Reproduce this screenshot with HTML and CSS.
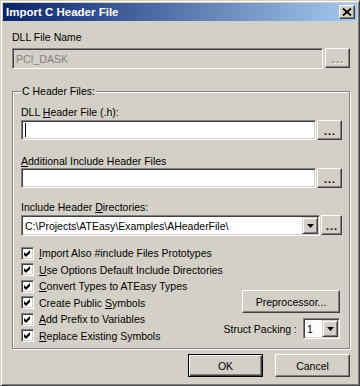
FILE: index.html
```html
<!DOCTYPE html>
<html lang="en">
<head>
    <meta charset="UTF-8">
    <title>Import C Header File</title>
    <link rel="stylesheet" href="styles.css">
</head>
<body>
    <div class="window">
        <div class="titlebar">
            <span class="title">Import C Header File</span>
            <button class="close">
                <svg width="10" height="8" viewBox="0 0 10 8"><path d="M1 0.5 L9 7.5 M9 0.5 L1 7.5" stroke="#000" stroke-width="1.8" fill="none"/></svg>
            </button>
        </div>

        <div class="dialog">
            <div class="label">DLL File Name</div>
            <div class="field-row top-row">
                <div class="edit disabled">PCI_DASK</div>
                <button class="btn browse" disabled>...</button>
            </div>

            <fieldset class="group">
                <legend>C Header Files:</legend>

                <div class="label">DLL <u>H</u>eader File (.h):</div>
                <div class="field-row">
                    <div class="edit"><span class="caret"></span></div>
                    <button class="btn browse">...</button>
                </div>

                <div class="label spaced"><u>A</u>dditional Include Header Files</div>
                <div class="field-row flush">
                    <div class="edit"></div>
                    <button class="btn browse">...</button>
                </div>

                <div class="label spaced-sm">Include Header <u>D</u>irectories:</div>
                <div class="field-row">
                    <div class="combo">
                        <span class="combo-text">C:\Projects\ATEasy\Examples\AHeaderFile\</span>
                        <span class="drop"><svg width="7" height="4" viewBox="0 0 7 4"><path d="M0 0 H7 L3.5 4 Z" fill="#000"/></svg></span>
                    </div>
                    <button class="btn browse small">...</button>
                </div>

                <div class="options">
                    <div class="checks">
                        <div class="check-row"><span class="check"><svg width="7" height="7" viewBox="0 0 7 7"><path d="M0 2 L2 4 L6 0 L6 3 L2 7 L0 5 Z" fill="#000"/></svg></span><span><u>I</u>mport Also #include Files Prototypes</span></div>
                        <div class="check-row"><span class="check"><svg width="7" height="7" viewBox="0 0 7 7"><path d="M0 2 L2 4 L6 0 L6 3 L2 7 L0 5 Z" fill="#000"/></svg></span><span><u>U</u>se Options Default Include Directories</span></div>
                        <div class="check-row"><span class="check"><svg width="7" height="7" viewBox="0 0 7 7"><path d="M0 2 L2 4 L6 0 L6 3 L2 7 L0 5 Z" fill="#000"/></svg></span><span><u>C</u>onvert Types to ATEasy Types</span></div>
                        <div class="check-row"><span class="check"><svg width="7" height="7" viewBox="0 0 7 7"><path d="M0 2 L2 4 L6 0 L6 3 L2 7 L0 5 Z" fill="#000"/></svg></span><span>Create Public <u>S</u>ymbols</span></div>
                        <div class="check-row"><span class="check"><svg width="7" height="7" viewBox="0 0 7 7"><path d="M0 2 L2 4 L6 0 L6 3 L2 7 L0 5 Z" fill="#000"/></svg></span><span><u>A</u>dd Prefix to Variables</span></div>
                        <div class="check-row"><span class="check"><svg width="7" height="7" viewBox="0 0 7 7"><path d="M0 2 L2 4 L6 0 L6 3 L2 7 L0 5 Z" fill="#000"/></svg></span><span><u>R</u>eplace Existing Symbols</span></div>
                    </div>
                    <div class="side">
                        <button class="btn preproc">Preprocessor...</button>
                        <div class="packing">
                            <span>Struct Packing :</span>
                            <div class="combo mini">
                                <span class="combo-text">1</span>
                                <span class="drop"><svg width="7" height="4" viewBox="0 0 7 4"><path d="M0 0 H7 L3.5 4 Z" fill="#000"/></svg></span>
                            </div>
                        </div>
                    </div>
                </div>
            </fieldset>

            <div class="actions">
                <button class="btn action default">OK</button>
                <button class="btn action">Cancel</button>
            </div>
        </div>
    </div>
</body>
</html>
```

FILE: styles.css
```css
* {
    box-sizing: border-box;
}
body {
    margin: 0;
    font-family: "Liberation Sans", Arial, sans-serif;
    font-size: 10.5px;
    color: #000;
    background: #d4d0c8;
}
.window {
    width: 360px;
    height: 386px;
    padding: 2px;
    background: #d4d0c8;
    border: 1px solid;
    border-color: #d4d0c8 #404040 #404040 #d4d0c8;
    box-shadow: inset 1px 1px #fff, inset -1px -1px #808080;
}
.titlebar {
    height: 18px;
    display: flex;
    align-items: center;
    justify-content: space-between;
    padding: 0 2px 0 3px;
    background: linear-gradient(to right, #0a246a, #a6caf0);
    color: #fff;
    font-weight: bold;
    font-size: 11.5px;
}
.close {
    width: 16px;
    height: 14px;
    padding: 0;
    display: flex;
    align-items: center;
    justify-content: center;
    background: #d4d0c8;
    border: 1px solid;
    border-color: #fff #404040 #404040 #fff;
    box-shadow: inset -1px -1px #808080;
}
.dialog {
    padding: 10px 7px 0 9px;
}
.label {
    height: 13px;
    line-height: 13px;
    white-space: nowrap;
}
.label.spaced {
    margin-top: 15px;
}
.label.spaced-sm {
    margin-top: 13px;
}
.field-row {
    display: flex;
    gap: 1px;
    margin-top: 1px;
}
.field-row.top-row {
    margin-top: 4px;
    gap: 2px;
}
.field-row.flush {
    margin-top: 0;
}
.edit {
    flex: 1;
    height: 20px;
    padding: 0 3px;
    display: flex;
    align-items: center;
    background: #fff;
    border: 1px solid;
    border-color: #808080 #fff #fff #808080;
    box-shadow: inset 1px 1px #404040, inset -1px -1px #d4d0c8;
    white-space: nowrap;
}
.top-row .edit {
    height: 21px;
}
.edit.disabled {
    background: #d4d0c8;
    color: #808080;
}
.caret {
    width: 1px;
    height: 14px;
    background: #000;
}
.btn {
    font-family: inherit;
    font-size: 10.5px;
    color: #000;
    padding: 0;
    background: #d4d0c8;
    border: 1px solid;
    border-color: #fff #404040 #404040 #fff;
    box-shadow: inset -1px -1px #808080;
}
.browse {
    width: 25px;
    height: 20px;
    font-size: 11px;
    font-weight: bold;
    letter-spacing: 1px;
    padding: 2px 0 0 1px;
}
.browse:disabled {
    color: #808080;
    text-shadow: 1px 1px #fff;
}
.browse.small {
    width: 21px;
}
.combo {
    flex: 1;
    height: 21px;
    padding: 1px;
    display: flex;
    align-items: stretch;
    background: #fff;
    border: 1px solid;
    border-color: #808080 #fff #fff #808080;
    box-shadow: inset 1px 1px #404040, inset -1px -1px #d4d0c8;
}
.combo-text {
    flex: 1;
    padding-left: 2px;
    display: flex;
    align-items: center;
    white-space: nowrap;
    overflow: hidden;
}
.drop {
    width: 16px;
    display: flex;
    align-items: center;
    justify-content: center;
    background: #d4d0c8;
    border: 1px solid;
    border-color: #d4d0c8 #404040 #404040 #d4d0c8;
    box-shadow: inset 1px 1px #fff, inset -1px -1px #808080;
}
.combo.mini {
    flex: none;
    width: 37px;
}
.group {
    margin: 16px 0 0;
    padding: 8px 7px 4px 8px;
    min-width: 0;
    border: 1px solid #808080;
    box-shadow: inset 1px 1px #fff, 1px 1px #fff;
}
.group legend {
    padding: 0 1px;
    line-height: 13px;
    background: #d4d0c8;
}
.options {
    display: flex;
    justify-content: space-between;
    margin-top: 9px;
}
.check-row {
    height: 16.5px;
    display: flex;
    align-items: center;
    gap: 5px;
    white-space: nowrap;
}
.check {
    width: 13px;
    height: 13px;
    display: flex;
    align-items: center;
    justify-content: center;
    background: #fff;
    border: 1px solid;
    border-color: #808080 #fff #fff #808080;
    box-shadow: inset 1px 1px #404040, inset -1px -1px #d4d0c8;
}
.side {
    display: flex;
    flex-direction: column;
    align-items: flex-end;
    gap: 5px;
    padding-top: 45px;
    margin-right: 2px;
}
.preproc {
    width: 98px;
    height: 23px;
}
.packing {
    display: flex;
    align-items: center;
    gap: 6px;
}
.actions {
    display: flex;
    justify-content: flex-end;
    gap: 12px;
    margin-top: 5px;
}
.action {
    width: 75px;
    height: 23px;
}
.action.default {
    border: 1px solid #000;
    box-shadow: inset 1px 1px #fff, inset -1px -1px #404040, inset -2px -2px #808080;
}
```
